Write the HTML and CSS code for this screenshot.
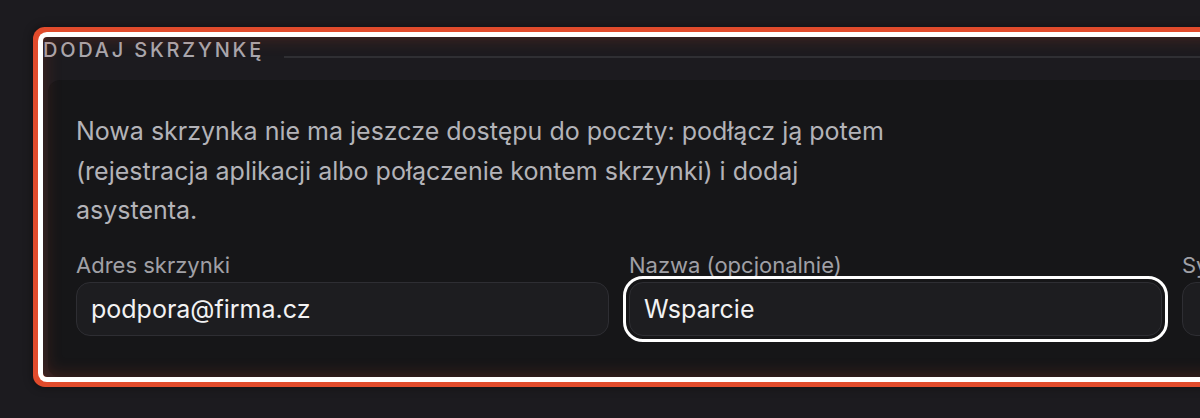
FILE: index.html
```html
<!DOCTYPE html>
<html lang="pl">
<head>
<meta charset="utf-8">
<title>Dodaj skrzynkę</title>
<link rel="stylesheet" href="styles.css">
</head>
<body>
<section class="section">
  <div class="section-head">
    <h2 class="section-title">Dodaj skrzynkę</h2>
    <div class="section-rule"></div>
  </div>
  <div class="card">
    <p class="intro">Nowa skrzynka nie ma jeszcze dostępu do poczty: podłącz ją potem (rejestracja aplikacji albo połączenie kontem skrzynki) i dodaj asystenta.</p>
    <div class="fields">
      <label class="field">
        <span class="field-label">Adres skrzynki</span>
        <input class="field-input" type="text" value="podpora@firma.cz">
      </label>
      <label class="field">
        <span class="field-label">Nazwa (opcjonalnie)</span>
        <input class="field-input is-focused" type="text" value="Wsparcie">
      </label>
      <label class="field">
        <span class="field-label">Sygnatura (opcjonalnie)</span>
        <input class="field-input" type="text" value="">
      </label>
    </div>
  </div>
</section>
</body>
</html>
```

FILE: styles.css
```css
html, body {
  margin: 0;
  padding: 0;
  overflow: hidden;
  background: #1c1b1f;
}

body {
  font-family: Inter, "Noto Sans", "Liberation Sans", sans-serif;
  padding: 37px 0 0 43px;
  width: 1900px;
  min-height: 418px;
  box-sizing: border-box;
}

.section {
  position: relative;
  width: 1800px;
}

.section::after {
  content: "";
  position: absolute;
  inset: 0;
  border-radius: 4px;
  pointer-events: none;
  box-shadow:
    0 0 0 5px #ffffff,
    0 0 0 10px #e14b2c,
    0 0 8px 11px rgba(0, 0, 0, 0.35),
    inset 0 0 18px rgba(225, 75, 44, 0.26);
}

.section-head {
  display: flex;
  align-items: flex-start;
  height: 43px;
  padding-top: 1px;
  box-sizing: border-box;
}

.section-title {
  margin: 0;
  font-size: 20px;
  line-height: 24px;
  font-weight: 500;
  letter-spacing: 2.8px;
  text-transform: uppercase;
  color: #a9a7ad;
}

.section-rule {
  flex: 1;
  height: 2px;
  margin-top: 18px;
  margin-left: 20px;
  background: #2f2f33;
}

.card {
  margin-left: 5px;
  background: #161618;
  border-radius: 12px;
  padding: 32px 28px 41px;
}

.intro {
  margin: 0;
  max-width: 822px;
  font-size: 25px;
  line-height: 39.6px;
  color: #b3b3b8;
}

.fields {
  margin-top: 20px;
  display: grid;
  grid-template-columns: repeat(3, 533px);
  column-gap: 20px;
}

.field {
  display: flex;
  flex-direction: column;
  gap: 3px;
}

.field-label {
  font-size: 22px;
  line-height: 28px;
  color: #a0a0a6;
}

.field-input {
  box-sizing: border-box;
  height: 54px;
  width: 100%;
  margin: 0;
  padding: 0 14px;
  border: 1px solid #2e2e33;
  border-radius: 14px;
  background: #1d1d20;
  color: #f2f2f3;
  font-family: Inter, "Noto Sans", "Liberation Sans", sans-serif;
  font-size: 25px;
  outline: none;
}

.field-input.is-focused {
  outline: 3px solid #ffffff;
  outline-offset: 3px;
}
```
